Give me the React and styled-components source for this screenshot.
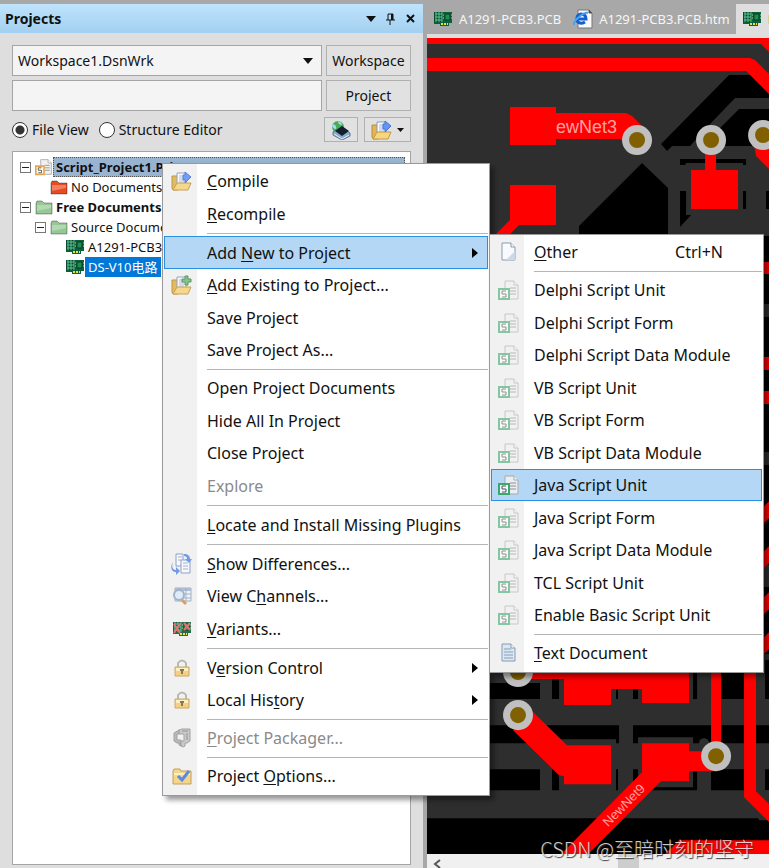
import { useState } from "react";
import styled, { createGlobalStyle, css } from "styled-components";

/* -----------------------------
   STYLES
----------------------------- */

const GlobalStyle = createGlobalStyle`
  * {
    box-sizing: border-box;
  }

  body {
    margin: 0;
    background: #a8a8a8;
    color: #111;
    font-family: "Noto Sans", "Noto Sans CJK SC", sans-serif;
    font-size: 13px;
  }

  button, input, select {
    font: inherit;
    color: inherit;
  }
`;

const Shell = styled.div`
  position: relative;
  display: grid;
  grid-template-columns: 55% 1fr;
  column-gap: 4px;
  height: 100vh;
  padding-top: 4px;
  overflow: hidden;
  background: #a8a8a8;
`;

/* Projects panel */
const Panel = styled.section`
  display: flex;
  flex-direction: column;
  min-width: 0;
  background: #dedede;
`;

const PanelHeader = styled.header`
  display: flex;
  align-items: center;
  justify-content: space-between;
  height: 29px;
  padding: 0 4px 0 5px;
  background: linear-gradient(#bfe3fc, #a2d0f0);
`;

const PanelTitle = styled.h1`
  margin: 0;
  font-size: 14px;
  font-weight: 700;
`;

const HeaderTools = styled.div`
  display: flex;
  gap: 4px;
`;

const IconButton = styled.button`
  display: flex;
  align-items: center;
  justify-content: center;
  width: 16px;
  height: 20px;
  padding: 0;
  border: 0;
  background: none;
`;

const PanelBody = styled.div`
  display: flex;
  flex: 1;
  flex-direction: column;
  padding: 12px 12px 3px;
`;

const Fields = styled.div`
  display: grid;
  grid-template-columns: 1fr 85px;
  gap: 4px;
`;

const fieldBox = css`
  width: 100%;
  height: 31px;
  border: 1px solid #a5a5a5;
  border-radius: 0;
  background: #f4f4f4;
`;

const SelectWrap = styled.div`
  position: relative;

  svg {
    position: absolute;
    top: 13px;
    right: 9px;
    pointer-events: none;
  }
`;

const Select = styled.select`
  ${fieldBox}
  padding: 0 5px;
  appearance: none;
  font-size: 14px;
`;

const TextBox = styled.input`
  ${fieldBox}
  padding: 0 5px;
`;

const Button = styled.button`
  display: flex;
  align-items: center;
  justify-content: center;
  height: ${({ $small }) => ($small ? "25px" : "31px")};
  padding: 0 ${({ $small }) => ($small ? "6px" : "0")};
  gap: 4px;
  border: 1px solid #b0b0b0;
  background: #e1e1e1;
  font-size: 14px;
`;

const ViewRow = styled.div`
  display: flex;
  align-items: center;
  justify-content: space-between;
  height: 25px;
  margin: 6px 0 9px;
  font-size: 14px;
`;

const Group = styled.div`
  display: flex;
  gap: ${({ $gap }) => $gap}px;
`;

const RadioLabel = styled.label`
  display: flex;
  align-items: center;
  gap: 4px;
`;

const Radio = styled.input`
  width: 16px;
  height: 16px;
  margin: 0;
  appearance: none;
  border: 1px solid #333;
  border-radius: 50%;
  background: #fff;

  &:checked {
    background: radial-gradient(circle, #333 4px, #fff 5px);
  }
`;

/* Tree */
const Tree = styled.ul`
  flex: 1;
  margin: 0;
  padding: 5px 5px 0 7px;
  border: 1px solid #a5a5a5;
  background: #fff;
  list-style: none;
`;

const TreeRow = styled.li`
  display: flex;
  align-items: center;
  height: 20px;
  padding-left: ${({ $level }) => $level * 15}px;
  font-weight: ${({ $bold }) => ($bold ? 700 : 400)};
  white-space: nowrap;
`;

const Toggle = styled.button`
  display: flex;
  width: 11px;
  height: 11px;
  margin-right: 4px;
  padding: 0;
  align-items: center;
  justify-content: center;
  border: 1px solid #777;
  background: #fff;
`;

const TreeLabel = styled.span`
  flex: ${({ $mark }) => ($mark === "focus" ? "1" : "none")};
  height: 20px;
  padding: 0 3px;
  line-height: 20px;

  ${({ $mark }) =>
    $mark === "focus"
      ? `
        background: #99b4d1;
        outline: 1px dotted #555;
        outline-offset: -1px;
      `
      : $mark === "selected"
      ? `
        background: #0078d7;
        color: #fff;
      `
      : ""}
`;

/* Document area */
const Documents = styled.main`
  display: flex;
  flex-direction: column;
  min-width: 0;
`;

const Tabs = styled.nav`
  display: flex;
  height: 34px;
  overflow: hidden;
  border-bottom: 4px solid #dedede;
`;

const Tab = styled.a`
  display: flex;
  flex: none;
  align-items: center;
  gap: 6px;
  padding: 0 6px;
  background: ${({ $active }) => ($active ? "#dedede" : "#a8a8a8")};
  color: ${({ $active }) => ($active ? "#8a6a00" : "#f6f6f6")};
  font-size: 13px;
  text-decoration: none;
  white-space: nowrap;
`;

const Board = styled.svg`
  display: block;
  flex: 1;
  width: 100%;
  min-height: 0;
  background: #2e2e2e;
`;

const ScrollTrack = styled.div`
  display: flex;
  align-items: stretch;
  height: 14px;
  background: #f0f0f0;
`;

const ScrollArrow = styled.button`
  display: flex;
  align-items: flex-end;
  width: 20px;
  margin-right: 50%;
  padding: 0 0 0 6px;
  border: 0;
  background: none;
`;

const ScrollThumb = styled.div`
  width: 21px;
  background: #cdcdcd;
`;

const Signature = styled.div`
  position: absolute;
  right: 15px;
  bottom: 4px;
  z-index: 1;
  color: rgba(255, 255, 255, 0.78);
  font-family: "Noto Sans CJK SC", sans-serif;
  font-size: 20px;
  font-weight: 300;
  line-height: 30px;
  text-shadow: 1px 1px 1px #333;
`;

/* Menus */
const Menu = styled.ul`
  position: absolute;
  top: ${({ $top }) => $top}px;
  left: ${({ $left }) => $left}px;
  z-index: 2;
  width: ${({ $width }) => $width}px;
  margin: 0;
  padding: 1px 1px 3px;
  border: 1px solid #999;
  background: linear-gradient(to right, #f1f1f1 34px, #fff 34px);
  box-shadow: 4px 4px 5px rgba(0, 0, 0, 0.4);
  font-size: 16px;
  list-style: none;
`;

const MenuRow = styled.li`
  position: relative;
  height: 32px;

  &:nth-child(even) {
    height: 33px;
  }
`;

const MenuButton = styled.button`
  display: grid;
  grid-template-columns: 33px 1fr auto;
  column-gap: 9px;
  align-items: center;
  width: 100%;
  height: 100%;
  padding: 0 9px 0 0;
  border: 1px solid ${({ $active }) => ($active ? "#2a8fe0" : "transparent")};
  background: ${({ $active }) => ($active ? "#b3d7f4" : "none")};
  color: ${({ disabled }) => (disabled ? "#8a8a8a" : "#111")};
  text-align: left;
  line-height: 20px;
  white-space: nowrap;

  u {
    text-underline-offset: 2px;
  }
`;

const MenuIcon = styled.span`
  display: flex;
  justify-content: center;
  opacity: ${({ $faded }) => ($faded ? 0.55 : 0.9)};
`;

const Shortcut = styled.span`
  padding-right: 29px;
`;

const Separator = styled.li`
  height: 6px;
  margin-left: 43px;
  background: linear-gradient(#b5b5b5, #b5b5b5) center / 100% 1px no-repeat;
`;

/* -----------------------------
   ICONS
----------------------------- */

const Down = ({ size = 10 }) => (
  <svg width={size} height="6" viewBox="0 0 10 6">
    <path d="M0 0h10L5 6z" fill="#111" />
  </svg>
);

const Right = () => (
  <svg width="6" height="10" viewBox="0 0 6 10">
    <path d="M0 0l6 5-6 5z" fill="#000" />
  </svg>
);

const Chip = ({ crossed }) => (
  <svg width="20" height="16" viewBox="0 0 20 16">
    <path d="M1 1h18v11h-3v3H7v-2H1z" fill="#0c6038" />
    <path d="M1 1h9v10H1z" fill="#0b4634" />
    <path d="M2 3h7M2 6h7M2 9h7M3 1v10M6 1v10M9 1v10" stroke="#5cc48a" fill="none" />
    <path d="M12 3h5v6h-5z" fill="#1d8d50" stroke="#063d29" />
    <path d="M11 4h-1m1 3h-1m8-3h1m-1 3h1" stroke="#a2dab4" />
    <path d="M8 13h7" stroke="#e6e63a" strokeWidth="2" strokeDasharray="2 1" />
    {crossed && (
      <path d="M2 3l6 9m0-9l-6 9M12 2l6 7m0-7l-6 7" stroke="#e66464" strokeWidth="2" />
    )}
  </svg>
);

const Folder = ({ color }) => (
  <svg width="18" height="15" viewBox="0 0 18 15">
    <path d="M1 14V3l1-2h5l2 2h8v11z" fill={color} stroke="#00000055" />
    <path d="M2 5h14v3L2 11z" fill="#fff" opacity=".3" />
  </svg>
);

const OpenFolder = ({ plus }) => (
  <svg width="22" height="20" viewBox="0 0 22 20">
    <path d="M1 5h5l1 2v12H2l-1-2z" fill="#e2b650" stroke="#b58e3c" />
    <path d="M6 2h9v13H6z" fill="#f6f9ff" stroke="#8a9bb8" />
    <path d="M8 5h5M8 7h5M8 9h5M8 11h5" stroke="#a9bad8" />
    <path d="M2 19l4-7h14l-3 7z" fill="#f6d583" stroke="#c49a42" />
    {plus ? (
      <path d="M14 1h3v3h3v3h-3v3h-3V7h-3V4h3z" fill="#7bbd83" stroke="#4d8f57" />
    ) : (
      <path d="M14 1l6 5-6 6V9h-2V4h2z" fill="#6595f4" stroke="#4475d6" />
    )}
  </svg>
);

const ScriptIcon = ({ color = "#2ba661", width = 22 }) => (
  <svg width={width} height="20" viewBox="0 0 22 20">
    <path d="M7 1h9l4 4v14H7z" fill="#f1f1f1" stroke="#a5a5a5" />
    <path d="M16 1v4h4" fill="#fff" stroke="#a5a5a5" />
    <path d="M12 8h6M12 11h6M12 14h6" stroke="#8a8a8a" />
    <path d="M1 9h10v10H1z" fill="#fff" stroke={color} strokeWidth="2" />
    <path d="M8 11H4v3h4v3H4" fill="none" stroke="#444" />
  </svg>
);

const PageIcon = ({ lines }) => (
  <svg width="16" height="20" viewBox="0 0 16 20">
    <path d="M1 1h9l4 4v13H1z" fill={lines ? "#dbe6f2" : "#fafcff"} stroke="#7c93ad" />
    <path d="M10 1v4h4" fill="#fff" stroke="#7c93ad" />
    {lines ? (
      <path d="M3 6h7M3 9h9M3 12h9M3 15h9" stroke="#7894b1" />
    ) : (
      <path d="M14 9v9H5z" fill="#cad5e8" />
    )}
  </svg>
);

const Differences = () => (
  <svg width="22" height="22" viewBox="0 0 22 22">
    <path d="M5 1h7v12H5z" fill="#f8faff" stroke="#8299c2" />
    <path d="M10 7h9v13h-9z" fill="#f8faff" stroke="#8299c2" />
    <path d="M7 4h4M7 7h3M12 10h5M12 13h5M12 16h5" stroke="#9badcc" />
    <path d="M2 9C0 14 2 17 5 17v-3l4 4-4 4v-3C0 19-1 13 2 9z" fill="#6492e7" />
    <path d="M13 1c4 0 6 2 6 5h2l-3 4-4-4h2c0-2-1-3-3-3z" fill="#6492e7" />
  </svg>
);

const Channels = () => (
  <svg width="20" height="20" viewBox="0 0 20 20">
    <path d="M3 2h16v13H3z" fill="#eef3fa" stroke="#9ba9bf" />
    <path d="M3 2h16v3H3z" fill="#a7b8d5" />
    <path d="M3 8h16M3 12h16M8 2v13M14 2v13" stroke="#9ba9bf" />
    <circle cx="7" cy="9" r="5" fill="#dcebfa" stroke="#9aabc2" strokeWidth="2" />
    <path d="M10 14l4 4" stroke="#d29a55" strokeWidth="3" />
  </svg>
);

const Lock = () => (
  <svg width="18" height="20" viewBox="0 0 18 20">
    <path d="M5 9V5q4-5 8 0v4" fill="none" stroke="#b4b4b4" strokeWidth="2" />
    <path d="M2 9h14v9H2z" fill="#f3cf76" stroke="#c7a25c" />
    <path d="M3 10h12v3H3z" fill="#fff0b9" />
    <path d="M9 11v5M7 12h4" stroke="#7d6d4b" strokeWidth="2" />
  </svg>
);

const Packager = () => (
  <svg width="18" height="20" viewBox="0 0 18 20">
    <path d="M6 2l3-1h8v12l-3 2h-2v3l-2 1-4-2v-4h5V6H6z" fill="#c6c6c6" stroke="#999" />
    <path d="M1 5l5-3v4H4v6h4v3H4l-3-2z" fill="#b4b4b4" stroke="#999" />
    <path d="M9 3h6M14 5v7M8 15v3" stroke="#888" />
  </svg>
);

const OptionsIcon = () => (
  <svg width="20" height="17" viewBox="0 0 20 17">
    <path d="M1 3l1-2h6l1 2h10v13H1z" fill="#f6d27b" stroke="#ba994f" />
    <path d="M2 6h16" stroke="#fff0ba" strokeWidth="2" />
    <path d="M6 8l4 4 7-9" fill="none" stroke="#507ee0" strokeWidth="3" />
  </svg>
);

const Compiler = () => (
  <svg width="20" height="20" viewBox="0 0 20 20">
    <circle cx="7" cy="7" r="6" fill="#4aae50" />
    <path d="M2 4q4 1 3 5-3 0-4-3zM7 1q4 1 4 4-4 0-4-4z" fill="#a4d9f6" />
    <path d="M2 12l8-5 9 6v3l-8 4-9-5z" fill="#8caac9" stroke="#587898" />
    <path d="M4 11l7-5 7 5-7 5z" fill="#15202d" />
    <path d="M3 14l8 5 7-4" fill="none" stroke="#e2effa" />
  </svg>
);

const HtmlIcon = () => (
  <svg width="20" height="20" viewBox="0 0 20 20">
    <path d="M5 1h11l3 3v15H5z" fill="#fafafa" stroke="#777" />
    <path d="M16 1v3h3" fill="#444" stroke="#555" />
    <path d="M12 13q-5 3-8-1-1-6 4-7 5 0 5 5H5" fill="none" stroke="#155fd0" strokeWidth="3" />
    <path d="M1 16Q0 13 6 8t9-4" fill="none" stroke="#46a4ee" strokeWidth="2" />
  </svg>
);

/* -----------------------------
   MENU DATA
----------------------------- */

const scriptKinds = [
  "Delphi Script Unit",
  "Delphi Script Form",
  "Delphi Script Data Module",
  "VB Script Unit",
  "VB Script Form",
  "VB Script Data Module",
  "Java Script Unit",
  "Java Script Form",
  "Java Script Data Module",
  "TCL Script Unit",
  "Enable Basic Script Unit",
];

const newItems = [
  { text: "_Other", icon: <PageIcon />, shortcut: "Ctrl+N" },
  null,
  ...scriptKinds.map((text) => ({
    text,
    icon: <ScriptIcon />,
    active: text === "Java Script Unit",
    faded: text !== "Java Script Unit",
  })),
  null,
  { text: "_Text Document", icon: <PageIcon lines /> },
];

// "_" goes before the access key of each entry
const projectItems = [
  { text: "_Compile", icon: <OpenFolder /> },
  { text: "_Recompile" },
  null,
  { text: "Add _New to Project", active: true, arrow: true, children: newItems },
  { text: "_Add Existing to Project...", icon: <OpenFolder plus /> },
  { text: "Save Project" },
  { text: "Save Project As..." },
  null,
  { text: "Open Project Documents" },
  { text: "Hide All In Project" },
  { text: "Close Project" },
  { text: "Explore", disabled: true },
  null,
  { text: "_Locate and Install Missing Plugins" },
  null,
  { text: "_Show Differences...", icon: <Differences /> },
  { text: "View C_hannels...", icon: <Channels /> },
  { text: "_Variants...", icon: <Chip crossed /> },
  null,
  { text: "V_ersion Control", icon: <Lock />, arrow: true },
  { text: "Local His_tory", icon: <Lock />, arrow: true },
  null,
  { text: "_Project Packager...", icon: <Packager />, disabled: true },
  null,
  { text: "Project _Options...", icon: <OptionsIcon /> },
];

/* -----------------------------
   COMPONENTS
----------------------------- */

const Caption = ({ text }) => {
  const at = text.indexOf("_");
  if (at < 0) return <span>{text}</span>;
  return (
    <span>
      {text.slice(0, at)}
      <u>{text[at + 1]}</u>
      {text.slice(at + 2)}
    </span>
  );
};

const MenuList = ({ items, ...place }) => (
  <Menu role="menu" {...place}>
    {items.map((item, index) =>
      item ? (
        <MenuRow key={index} role="none">
          <MenuButton role="menuitem" $active={item.active} disabled={item.disabled}>
            <MenuIcon $faded={item.faded}>{item.icon}</MenuIcon>
            <Caption text={item.text} />
            {item.arrow && <Right />}
            {item.shortcut && <Shortcut>{item.shortcut}</Shortcut>}
          </MenuButton>
          {item.children && (
            <MenuList items={item.children} $top={-2} $left={325} $width={275} />
          )}
        </MenuRow>
      ) : (
        <Separator key={index} role="separator" />
      )
    )}
  </Menu>
);

const Collapse = () => (
  <Toggle aria-label="Collapse">
    <svg width="7" height="1">
      <path d="M0 0h7v1H0z" fill="#222" />
    </svg>
  </Toggle>
);

const Via = ({ x, y }) => (
  <g>
    <circle cx={x} cy={y} r="15" fill="#c0c0c0" />
    <circle cx={x} cy={y} r="8" fill="#806000" />
  </g>
);

const BoardView = () => (
  <Board viewBox="427 38 342 816" preserveAspectRatio="xMinYMin slice">
    {/* free areas */}
    <g fill="#000">
      <path d="M729 75h31l9 9v14h-34l-25 26-20 22h-18l-5 5-6-7z" />
      <path d="M739 109h30v37h-48l-3-16z" />
      <path d="M680 159h66v6h-3v-2h-57l-1 2h-5z" />
      <path d="M680 191h6v24h5l-11 12zM743 191h3v18h-3zM766 191h3v18h-3z" />
      <path d="M642 163l26 25v52h-89v-14z" />
      <path d="M764 236h5v68h-5zM764 317h5v135h-5zM764 465h5v100h-5zM764 587h5v67h-5z" />
      <path d="M489 683h51v16h-51zM552 672h7v27h-7zM616 672h2v27h-2zM633 672h5v27h-5zM693 672h4v27h-4zM711 672h33v27h-33zM765 660h4v39h-4z" />
      <path d="M489 725h130v18H489zM633 725h111v18H633zM756 725h13v18h-13z" />
      <path d="M489 769h51v21h-51zM552 769h7v21h-7zM616 769h2v21h-2zM633 769h64v21h-64zM711 769h33v21h-33zM765 769h4v21h-4z" />
      <path d="M427 818h342v36H427z" />
    </g>
    <g fill="#2e2e2e">
      <path d="M559 739h57v51h-57zM638 737h55v50h-55z" />
      <circle cx="704" cy="743" r="5" />
      <path d="M744 790h25v30h-10z" />
    </g>

    {/* copper */}
    <g fill="#f00">
      <path d="M427 38h342v14l-8-8H427z" />
      <path d="M427 58h323l5 2 14 14v20l-23-23H427z" />
      <path d="M510 107h46v6h70l6 3 14 14-17 17-9-8h-64v6h-46z" />
      <path d="M510 185h46v40h-37l-15 15h-14l20-20z" />
      <path d="M705 145h11v25h22v39h-47v-39h14z" />
      <path d="M754 145h15v24l-13-13z" />
      <path d="M764 262h5v12h-5zM764 357h5v13h-5zM764 391h5v13h-5z" />
      <path d="M764 506l5-5v17l-5 5zM764 551l5-5v17l-5 5zM764 597l5-5v17l-5 5zM764 637l5-5v17l-5 5z" />
      <path d="M525 672h164v31h-47v-14h-31v16h-47v-26h-39z" />
      <path d="M532 711l35 34h44v39h-47v-8l-5-1-46-45z" />
      <path d="M642 743h47v8h27v20h-27v10h-28l-73 73h-27l81-82z" />
      <path d="M711 672h10v80h-10zM744 672h12v119l13 13v18l-25-25z" />
      <path d="M665 854l14-14h90v14z" />
    </g>

    <Via x={637} y={140} />
    <Via x={711} y={140} />
    <Via x={763} y={135} />
    <Via x={518} y={672} />
    <Via x={518} y={715} />
    <Via x={716} y={756} />

    <g fill="#ffa0a0" fontFamily="Liberation Sans, sans-serif">
      <text x="556" y="133" fontSize="18">ewNet3</text>
      <text transform="translate(608 827) rotate(-45)" fontSize="13">NewNet9</text>
    </g>
  </Board>
);

const App = () => {
  const [view, setView] = useState("file");

  return (
    <Shell>
      <GlobalStyle />

      <Panel>
        <PanelHeader>
          <PanelTitle>Projects</PanelTitle>
          <HeaderTools>
            <IconButton aria-label="Panel menu">
              <Down />
            </IconButton>
            <IconButton aria-label="Pin">
              <svg width="9" height="12" viewBox="0 0 9 12">
                <path d="M2 7V1h5v6M0 7h9M4 7v5" fill="none" stroke="#111" />
                <path d="M5 1h2v6H5z" fill="#111" />
              </svg>
            </IconButton>
            <IconButton aria-label="Close">
              <svg width="9" height="9" viewBox="0 0 9 9">
                <path d="M1 1l7 7M8 1L1 8" stroke="#111" strokeWidth="2" />
              </svg>
            </IconButton>
          </HeaderTools>
        </PanelHeader>

        <PanelBody>
          <Fields>
            <SelectWrap>
              <Select aria-label="Workspace file">
                <option>Workspace1.DsnWrk</option>
              </Select>
              <Down />
            </SelectWrap>
            <Button>Workspace</Button>
            <TextBox type="text" aria-label="Project file" />
            <Button>Project</Button>
          </Fields>

          <ViewRow>
            <Group $gap={10}>
              <RadioLabel>
                <Radio
                  type="radio"
                  name="view"
                  checked={view === "file"}
                  onChange={() => setView("file")}
                />
                File View
              </RadioLabel>
              <RadioLabel>
                <Radio
                  type="radio"
                  name="view"
                  checked={view === "structure"}
                  onChange={() => setView("structure")}
                />
                Structure Editor
              </RadioLabel>
            </Group>
            <Group $gap={6}>
              <Button $small aria-label="Compile project">
                <Compiler />
              </Button>
              <Button $small aria-label="Open project">
                <OpenFolder />
                <Down size={7} />
              </Button>
            </Group>
          </ViewRow>

          <Tree>
            <TreeRow $level={0} $bold>
              <Collapse />
              <ScriptIcon color="#e3a64e" width={18} />
              <TreeLabel $mark="focus">Script_Project1.PrjScr</TreeLabel>
            </TreeRow>
            <TreeRow $level={2}>
              <Folder color="#e94a20" />
              <TreeLabel>No Documents Added</TreeLabel>
            </TreeRow>
            <TreeRow $level={0} $bold>
              <Collapse />
              <Folder color="#94c894" />
              <TreeLabel>Free Documents</TreeLabel>
            </TreeRow>
            <TreeRow $level={1}>
              <Collapse />
              <Folder color="#94c894" />
              <TreeLabel>Source Documents</TreeLabel>
            </TreeRow>
            <TreeRow $level={3}>
              <Chip />
              <TreeLabel>A1291-PCB3.PCB</TreeLabel>
            </TreeRow>
            <TreeRow $level={3}>
              <Chip />
              <TreeLabel $mark="selected">DS-V10电路</TreeLabel>
            </TreeRow>
          </Tree>
        </PanelBody>
      </Panel>

      <Documents>
        <Tabs>
          <Tab href="#pcb">
            <Chip />
            A1291-PCB3.PCB
          </Tab>
          <Tab href="#htm">
            <HtmlIcon />
            A1291-PCB3.PCB.htm
          </Tab>
          <Tab href="#ds" $active>
            <Chip />
            DS-V10
          </Tab>
        </Tabs>
        <BoardView />
        <ScrollTrack>
          <ScrollArrow aria-label="Scroll left">
            <svg width="9" height="9" viewBox="0 0 9 9">
              <path d="M7 1L2 5l5 4" fill="none" stroke="#555" strokeWidth="2" />
            </svg>
          </ScrollArrow>
          <ScrollThumb />
        </ScrollTrack>
      </Documents>

      <MenuList items={projectItems} $top={163} $left={162} $width={328} />
      <Signature>CSDN @至暗时刻的坚守</Signature>
    </Shell>
  );
};

export default App;
